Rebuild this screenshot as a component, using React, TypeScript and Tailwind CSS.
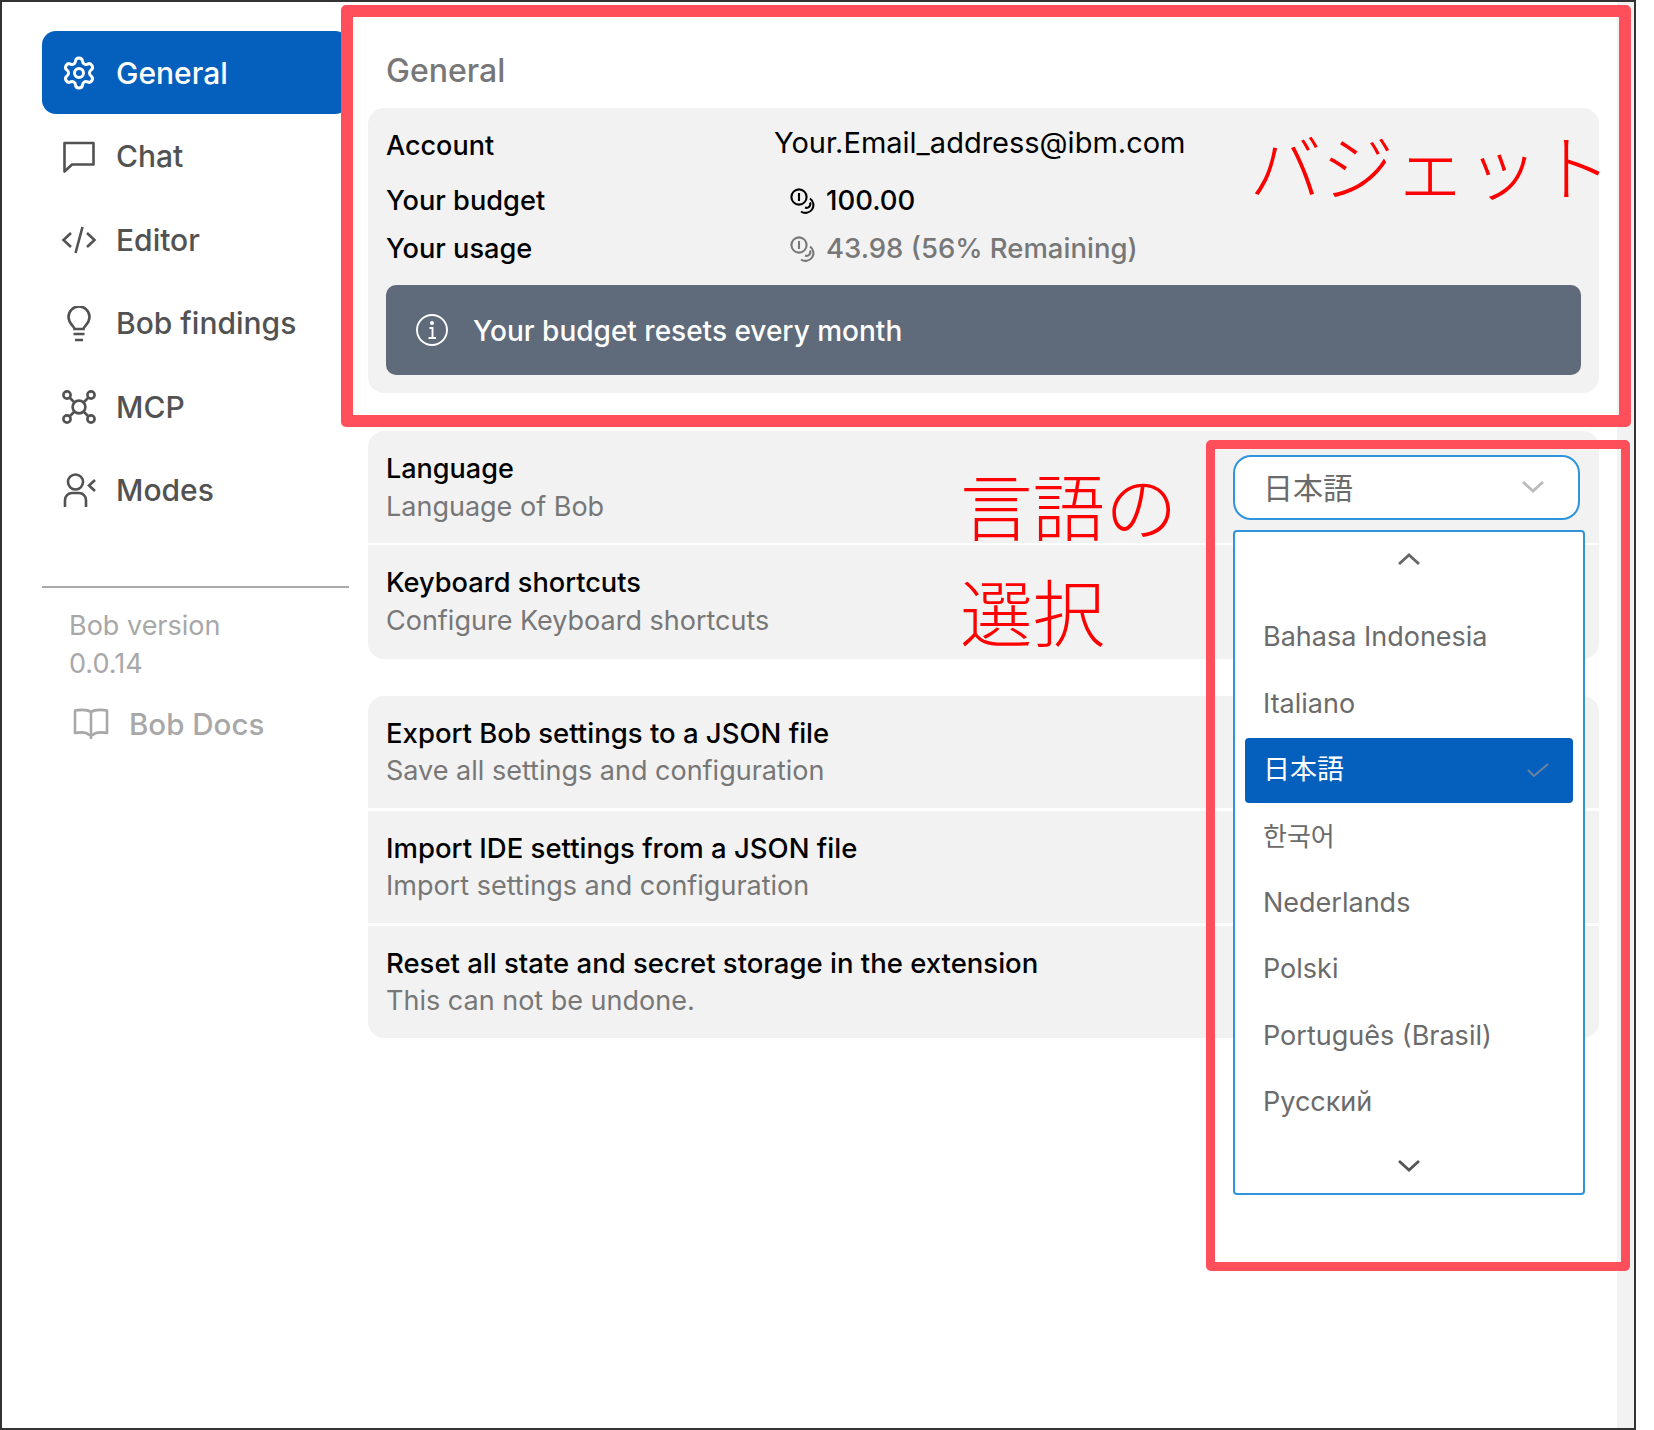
import { Settings } from "lucide-react";

const FONT = "font-['Inter','Noto_Sans_CJK_JP','Noto_Sans_CJK_KR',sans-serif]";

const ChatIcon = () => (
  <svg width="32" height="32" viewBox="0 0 32 32" fill="none" stroke="currentColor" strokeWidth="2.6" strokeLinejoin="round">
    <path d="M1.500 2h29v21.500H9l-7.500 7z" />
  </svg>
);
const CodeIcon = () => (
  <svg width="36" height="32" viewBox="0 0 36 32" fill="none" stroke="currentColor" strokeWidth="2.600">
    <path d="M10 9l-7.500 7 7.500 7M26 9l7.500 7-7.500 7M21.500 3l-7 26" />
  </svg>
);
const BulbIcon = () => (
  <svg width="32" height="36" viewBox="0 0 32 36" fill="none" stroke="currentColor" strokeWidth="2.600">
    <path d="M11.500 23c0-3-6-5-6-12a10.500 10.500 0 0 1 21 0c0 7-6 9-6 12z" />
    <path d="M10.500 28h11M12 34h8" />
  </svg>
);
const McpIcon = () => (
  <svg width="34" height="34" viewBox="0 0 34 34" fill="none" stroke="currentColor" strokeWidth="2.600">
    <circle cx="17" cy="17" r="6.400" />
    <circle cx="5" cy="5" r="3.600" />
    <circle cx="29" cy="5" r="3.600" />
    <circle cx="5" cy="29" r="3.600" />
    <circle cx="29" cy="29" r="3.600" />
    <path d="M7.500 7.500l5 5M26.500 7.500l-5 5M7.500 26.500l5-5M26.500 26.500l-5-5" />
  </svg>
);
const ModesIcon = () => (
  <svg width="33" height="35" viewBox="0 0 33 35" fill="none" stroke="currentColor" strokeWidth="2.600">
    <circle cx="12.500" cy="9" r="7.500" />
    <path d="M2 34v-7a7 7 0 0 1 7-7h7a7 7 0 0 1 7 7v7" />
    <path d="M32 7l-6 5.500 6 5.500" />
  </svg>
);
const BookIcon = () => (
  <svg width="36" height="32" viewBox="0 0 36 32" fill="none" stroke="currentColor" strokeWidth="2.600" strokeLinejoin="round">
    <path d="M18 27V4c-3-2-10-2.500-16-1.500V25c6-1 12-.5 14 2h4c2-2.500 8-3 14-2V2.500C28 1.500 21 2 18 4" />
    <path d="M18 27v4" />
  </svg>
);
const CoinsIcon = ({ className }: { className: string }) => (
  <svg className={className} width="26" height="26" viewBox="0 0 26 26" fill="none" stroke="currentColor" strokeWidth="2.100">
    <circle cx="9" cy="9" r="7.600" />
    <path d="M9 5v8" />
    <path d="M20 10.500a7.200 7.200 0 0 1-9 13" />
    <path d="M20 14.500a3.800 3.800 0 0 1-5 5" />
  </svg>
);
const InfoIcon = () => (
  <svg width="34" height="34" viewBox="0 0 34 34" fill="none" stroke="currentColor" strokeWidth="1.900">
    <circle cx="17" cy="17" r="15" />
    <path d="M14.500 15H17.500V25M13.500 25H21" />
    <circle cx="17" cy="10" r="1.100" fill="currentColor" />
  </svg>
);
const Chevron = ({ up, className }: { up?: boolean; className: string }) => (
  <svg className={className} width="24" height="14" viewBox="0 0 24 14" fill="none" stroke="currentColor" strokeWidth="2.800">
    <path d={up ? "M2 12L12 3l10 9" : "M2 2l10 9 10-9"} />
  </svg>
);

const nav = [
  { label: "Chat", icon: <ChatIcon /> },
  { label: "Editor", icon: <CodeIcon /> },
  { label: "Bob findings", icon: <BulbIcon /> },
  { label: "MCP", icon: <McpIcon /> },
  { label: "Modes", icon: <ModesIcon /> },
];

const languages = ["Bahasa Indonesia", "Italiano", "日本語", "한국어", "Nederlands", "Polski", "Português (Brasil)", "Русский"];

const Row = ({ title, desc }: { title: string; desc: string }) => (
  <div className="flex h-[112px] items-center bg-[#f2f2f2] pl-[18px]">
    <div>
      <div className="text-[27.5px] leading-[37px] font-medium text-black">{title}</div>
      <div className="text-[27px] leading-[37px] text-[#777777]">{desc}</div>
    </div>
  </div>
);

export default function App() {
  return (
    <div className={`h-[1430px] w-[1654px] bg-white ${FONT}`}>
      <div className="relative flex h-[1430px] w-[1636px] overflow-hidden border-2 border-[#333333] bg-white">
        {/* scroll track */}
        <div className="absolute top-0 right-0 h-full w-[17px] bg-[#f2f2f2]" />

        {/* sidebar */}
        <aside className="w-[366px] shrink-0 pt-[29px] pl-[40px]">
          <div className="flex h-[83px] w-[307px] items-center gap-[21px] rounded-[14px] bg-[#0560bd] pl-[21px] text-white">
            <Settings size={36} strokeWidth={2} className="-mx-[2px]" />
            <span className="pt-[2px] text-[30px] font-[550]">General</span>
          </div>
          {nav.map((item) => (
            <div key={item.label} className="flex h-[83.5px] items-center gap-[19px] pt-[2px] pl-[19px] text-[#525252]">
              <span className="flex w-[36px] justify-center">{item.icon}</span>
              <span className="text-[30px] font-medium">{item.label}</span>
            </div>
          ))}
          <div className="mt-[54px] h-[2px] w-[307px] bg-[#aaaaaa]" />
          <div className="pt-[19px] pl-[27px] text-[#a8a8a8]">
            <div className="text-[27px] leading-[38px]">Bob version</div>
            <div className="text-[27px] leading-[38px]">0.0.14</div>
            <div className="mt-[19px] flex items-center gap-[20px] pl-[4px]">
              <BookIcon />
              <span className="text-[29.5px] font-medium">Bob Docs</span>
            </div>
          </div>
        </aside>

        {/* content */}
        <main className="w-[1231px] shrink-0 pt-[49px]">
          <h1 className="mb-[17px] pl-[18px] text-[32px] leading-[40px] font-medium text-[#777777]">General</h1>

          <section className="rounded-[16px] bg-[#f2f2f2] px-[18px] pt-[17px] pb-[18px]">
            <div className="flex h-[42px] items-center">
              <span className="w-[388px] text-[27px] font-medium text-black">Account</span>
              <span className="mb-[6px] text-[29px] text-black">Your.Email_address@ibm.com</span>
            </div>
            <div className="mt-[10px] flex h-[48px] items-center">
              <span className="w-[404px] text-[27.2px] font-medium text-black">Your budget</span>
              <CoinsIcon className="mr-[10px] text-black" />
              <span className="text-[27.5px] font-medium text-black">100.00</span>
            </div>
            <div className="flex h-[48px] items-center">
              <span className="w-[404px] text-[27.2px] font-medium text-black">Your usage</span>
              <CoinsIcon className="mr-[10px] text-[#777777]" />
              <span className="text-[27.5px] font-medium text-[#777777]">43.98 (56% Remaining)</span>
            </div>
            <div className="mt-[12px] flex h-[90px] items-center gap-[24px] rounded-[10px] bg-[#5f6b7a] pl-[29px] text-white">
              <InfoIcon />
              <span className="pt-[2px] text-[28px] font-medium">Your budget resets every month</span>
            </div>
          </section>

          <section className="mt-[38px] flex flex-col gap-[2px]">
            <div className="flex h-[112px] items-center justify-between rounded-t-[16px] bg-[#f2f2f2] pr-[19px] pl-[18px]">
              <div className="pt-[2px]">
                <div className="text-[27px] leading-[38px] font-medium text-black">Language</div>
                <div className="text-[27px] leading-[38px] text-[#777777]">Language of Bob</div>
              </div>
              <div className="relative z-10 w-[347px]">
                <div className="flex h-[65px] items-center justify-between rounded-[18px] border-[2.5px] border-[#2f94dc] bg-white pr-[33px] pl-[28px]">
                  <span className="pt-[2px] text-[30px] text-[#6b6b6b]">日本語</span>
                  <Chevron className="text-[#bbbbbb]" />
                </div>
                <div className="absolute top-[75px] left-0 flex h-[665px] w-[352px] flex-col rounded-[4px] border-[2.5px] border-[#2f94dc] bg-white">
                  <div className="flex h-[73px] shrink-0 justify-center pt-[20px]">
                    <Chevron up className="text-[#666666]" />
                  </div>
                  {languages.map((lang) => (
                    <div key={lang} className="flex h-[66.4px] shrink-0 items-center">
                      {lang === "日本語" ? (
                        <div className="mx-[10px] flex h-[65px] w-[330px] items-center justify-between rounded-[4px] bg-[#0560bd] pr-[24px] pl-[18px] text-white">
                          <span className="text-[27px]">{lang}</span>
                          <svg width="22" height="16" viewBox="0 0 22 16" fill="none" stroke="#6d829c" strokeWidth="2">
                            <path d="M1 8l6 6L21 2" />
                          </svg>
                        </div>
                      ) : (
                        <span className={lang === "한국어" ? "pl-[28px] text-[26px] text-[#6b6b6b]" : "pl-[28px] text-[27px] text-[#6b6b6b]"}>{lang}</span>
                      )}
                    </div>
                  ))}
                  <div className="flex flex-1 items-center justify-center pt-[4px]">
                    <Chevron className="text-[#555555]" />
                  </div>
                </div>
              </div>
            </div>
            <div className="flex h-[114px] items-center rounded-b-[16px] bg-[#f2f2f2] pl-[18px]">
              <div>
                <div className="text-[27.2px] leading-[38px] font-medium text-black">Keyboard shortcuts</div>
                <div className="text-[27px] leading-[38px] text-[#777777]">Configure Keyboard shortcuts</div>
              </div>
            </div>
          </section>

          <section className="mt-[37px] flex flex-col gap-[3px] overflow-hidden rounded-[16px]">
            <Row title="Export Bob settings to a JSON file" desc="Save all settings and configuration" />
            <Row title="Import IDE settings from a JSON file" desc="Import settings and configuration" />
            <Row title="Reset all state and secret storage in the extension" desc="This can not be undone." />
          </section>
        </main>

        {/* annotations */}
        <div className="pointer-events-none absolute top-[3px] left-[339px] z-20 h-[422px] w-[1290px] rounded-[5px] border-[12px] border-[#ff4f5b]" />
        <div className="pointer-events-none absolute top-[438px] left-[1204px] z-20 h-[831px] w-[424px] rounded-[5px] border-[9px] border-[#ff4f5b]" />
        <div className="absolute top-[122px] left-[1247px] z-20 text-[72.500px] leading-[90px] font-light text-[#ff0000]">バジェット</div>
        <div className="absolute top-[454px] left-[958px] z-20 text-[72.500px] leading-[106px] font-light text-[#ff0000]">
          言語の
          <br />
          選択
        </div>
      </div>
    </div>
  );
}
